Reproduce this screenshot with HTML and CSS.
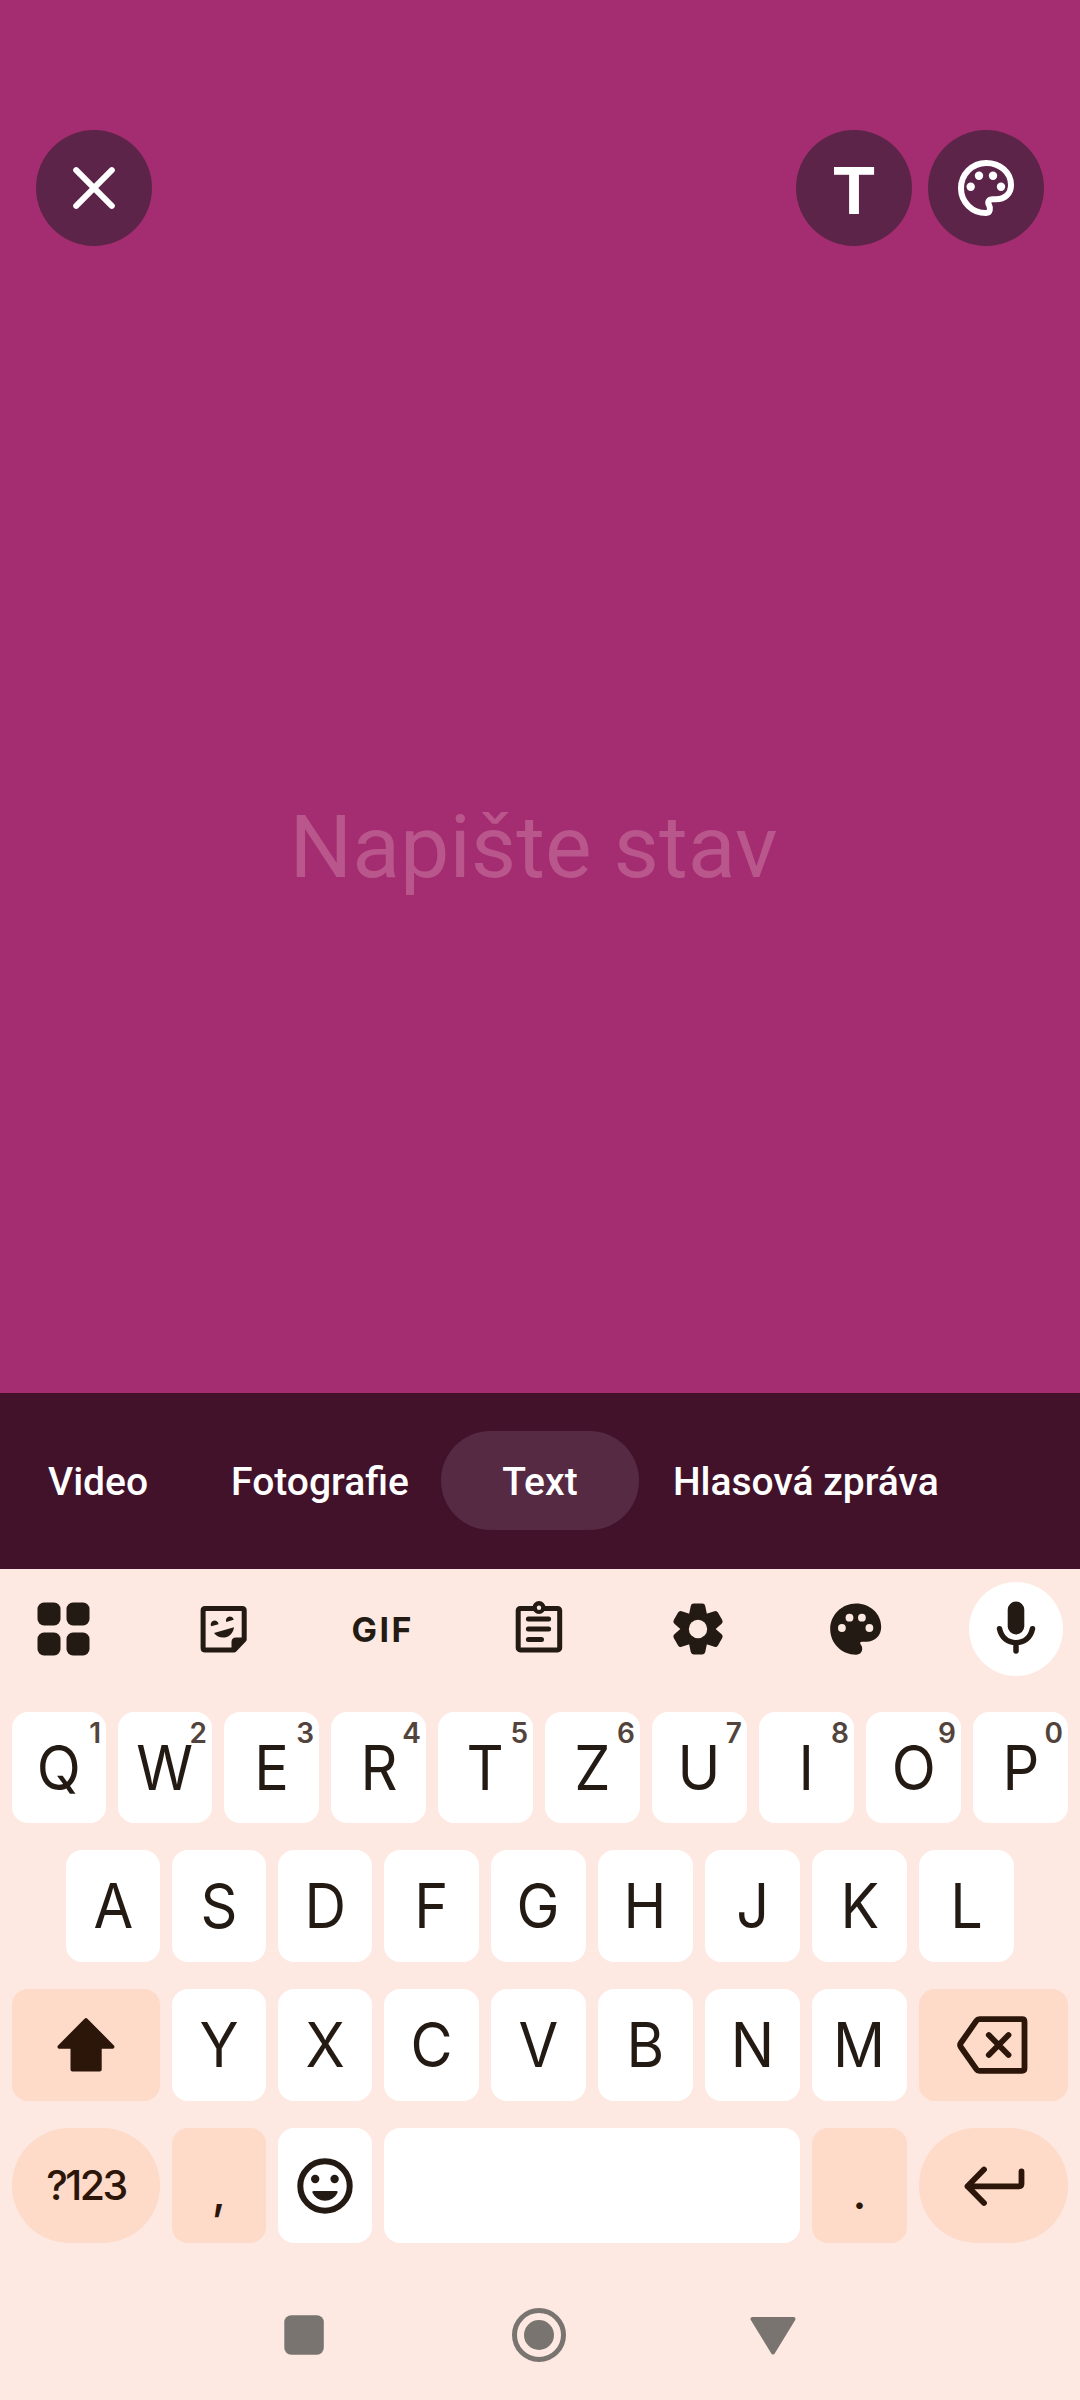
FILE: index.html
```html
<!DOCTYPE html>
<html lang="cs">
<head>
<meta charset="utf-8">
<title>Stav</title>
<link rel="stylesheet" href="styles.css">
</head>
<body>
<main class="composer">
  <header class="actions">
    <button class="round" aria-label="Zavřít">
      <svg width="56" height="56" viewBox="0 0 56 56" fill="none" stroke="currentColor" stroke-width="6" stroke-linecap="round"><path d="M10.2 10.2 45.8 45.8M45.8 10.2 10.2 45.8"/></svg>
    </button>
    <div class="tools">
      <button class="round font-toggle">T</button>
      <button class="round" aria-label="Barva">
        <svg width="56" height="56" viewBox="0 0 56 56"><path fill="none" stroke="currentColor" stroke-width="6" d="M28.3 3C42 3 53 12.5 53 25c0 9-6.500 14.300-15 14.300h-3C30.500 39.300 29.300 42 31 45c1.600 3 1.500 8-3 8C14 53 3 42 3 28.300 3 14.500 14 3 28.300 3Z"/><g fill="currentColor"><circle cx="12.700" cy="26.700" r="4.200"/><circle cx="21" cy="15.700" r="4.200"/><circle cx="35" cy="15.700" r="4.200"/><circle cx="43" cy="26.700" r="4.200"/></g></svg>
      </button>
    </div>
  </header>
  <p class="placeholder">Napište stav</p>
</main>

<nav class="modes">
  <span class="mode">Video</span>
  <span class="mode">Fotografie</span>
  <span class="mode active">Text</span>
  <span class="mode">Hlasová zpráva</span>
</nav>

<section class="keyboard">
  <div class="toolbar">
    <span class="tool"><svg width="56" height="56" viewBox="0 0 56 56" fill="currentColor"><rect x="2.500" y="1.500" width="23" height="23" rx="6.500"/><rect x="31.500" y="1.500" width="23" height="23" rx="6.500"/><rect x="2.500" y="31.500" width="23" height="23" rx="6.500"/><rect x="31.500" y="31.500" width="23" height="23" rx="6.500"/></svg></span>
    <span class="tool"><svg width="56" height="56" viewBox="0 0 56 56" fill="currentColor"><path fill="none" stroke="currentColor" stroke-width="5" stroke-linejoin="round" d="M11.100 7.500H48.200q2 0 2 2V38.500L40.200 48.900H11.100q-2 0-2-2V9.500q0-2 2-2Z"/><path d="M37.500 50V41q0-4.500 4.500-4.500H52L40 50Z"/><path d="M17.200 25.300a3.900 3.900 0 1 1 7.300-2.100ZM32.300 21a3.900 3.900 0 1 1 7.400-2.200ZM20 32 40 26.300C38.500 38 25.500 39.500 20 32Z"/></svg></span>
    <span class="tool gif">GIF</span>
    <span class="tool"><svg width="56" height="56" viewBox="0 0 56 56" fill="none" stroke="currentColor" stroke-width="5" stroke-linecap="round"><rect x="7.200" y="7.500" width="41.500" height="41.400" rx="2"/><circle cx="28" cy="6.500" r="6.500" fill="currentColor" stroke="none"/><circle cx="28" cy="6.700" r="2.200" fill="#fce9e1" stroke="none"/><path d="M17.400 18H37.600M17.400 28H37.600M17.400 38.400H30.500"/></svg></span>
    <span class="tool"><svg width="56" height="56" viewBox="0 0 56 56"><g fill="currentColor" stroke="currentColor" stroke-width="6" stroke-linejoin="round"><path id="tooth" d="M23.700 5.500H32.300L34.500 16V40L32.300 50.500H23.700L21.500 40V16Z"/><use href="#tooth" transform="rotate(60 28 28)"/><use href="#tooth" transform="rotate(120 28 28)"/></g><circle cx="28" cy="28" r="9.200" fill="#fce9e1"/></svg></span>
    <span class="tool"><svg width="56" height="56" viewBox="0 0 56 56"><path fill="currentColor" d="M27 2.500C41 2.500 52.200 12.500 52.200 26c0 8.500-6.200 14.700-14.700 14.700H33C31 40.700 30.800 42 31.600 43.300 32.800 45 33.200 46 33.200 48c0 3.500-2.700 5.700-6.200 5.700C13 53.700 1.200 42.500 1.200 28 1.200 14 13 2.500 27 2.500Z"/><g fill="#fce9e1"><circle cx="12.900" cy="27" r="3.900"/><circle cx="20.500" cy="16.700" r="3.900"/><circle cx="32.900" cy="16.700" r="3.900"/><circle cx="40.400" cy="27" r="3.900"/></g></svg></span>
    <span class="tool mic"><svg width="56" height="56" viewBox="0 0 56 56"><rect x="19.700" y=".500" width="16.600" height="33" rx="8.300" fill="currentColor"/><path fill="none" stroke="currentColor" stroke-width="5.500" stroke-linecap="round" d="M11.500 27.700C13.500 37 20 41.700 28 41.700S42.500 37 44.500 27.700M28 42V50"/></svg></span>
  </div>

  <div class="row first">
    <button class="key slim"><span class="cap">Q</span><sup class="hint">1</sup></button>
    <button class="key slim"><span class="cap">W</span><sup class="hint">2</sup></button>
    <button class="key"><span class="cap">E</span><sup class="hint">3</sup></button>
    <button class="key"><span class="cap">R</span><sup class="hint">4</sup></button>
    <button class="key"><span class="cap">T</span><sup class="hint">5</sup></button>
    <button class="key"><span class="cap">Z</span><sup class="hint">6</sup></button>
    <button class="key"><span class="cap">U</span><sup class="hint">7</sup></button>
    <button class="key"><span class="cap">I</span><sup class="hint">8</sup></button>
    <button class="key"><span class="cap">O</span><sup class="hint">9</sup></button>
    <button class="key"><span class="cap">P</span><sup class="hint">0</sup></button>
  </div>
  <div class="row indent">
    <button class="key slim"><span class="cap">A</span></button>
    <button class="key slim"><span class="cap">S</span></button>
    <button class="key slim"><span class="cap">D</span></button>
    <button class="key"><span class="cap">F</span></button>
    <button class="key"><span class="cap">G</span></button>
    <button class="key"><span class="cap">H</span></button>
    <button class="key"><span class="cap">J</span></button>
    <button class="key"><span class="cap">K</span></button>
    <button class="key"><span class="cap">L</span></button>
  </div>
  <div class="row">
    <button class="key special wide" aria-label="Shift"><svg width="60" height="60" viewBox="0 0 60 60" fill="currentColor" stroke="currentColor" stroke-width="4" stroke-linejoin="round"><path d="M30 5.200 3.500 31.800H16.500V54.500H43.700V31.800H56.500Z"/></svg></button>
    <button class="key slim"><span class="cap">Y</span></button>
    <button class="key slim"><span class="cap">X</span></button>
    <button class="key"><span class="cap">C</span></button>
    <button class="key"><span class="cap">V</span></button>
    <button class="key"><span class="cap">B</span></button>
    <button class="key"><span class="cap">N</span></button>
    <button class="key"><span class="cap">M</span></button>
    <button class="key special wide end" aria-label="Backspace"><svg width="80" height="60" viewBox="0 0 80 60" fill="none" stroke="currentColor" stroke-width="5.800" stroke-linecap="round" stroke-linejoin="round"><path d="M25.500 4.200H68q2.500 0 2.500 2.500V53.300q0 2.500-2.500 2.500H25.500q-2 0-3-1.500L6.800 32q-1.400-2 0-4L22.500 5.700q1-1.500 3-1.500ZM34.800 20 54.500 40M54.500 20 34.800 40"/></svg></button>
  </div>
  <div class="row last">
    <button class="key special wide pill symbols">?123</button>
    <button class="key special slim punct">,</button>
    <button class="key slim" aria-label="Emoji"><svg width="60" height="60" viewBox="0 0 60 60" fill="currentColor"><circle cx="30" cy="30" r="24.700" fill="none" stroke="currentColor" stroke-width="6"/><circle cx="20.200" cy="23" r="4.200"/><circle cx="39.600" cy="23" r="4.200"/><path d="M18.500 35H41.500q1.800 0 1 1.800C37.500 47.300 22.500 47.300 17.500 36.800q-.8-1.800 1-1.800Z"/></svg></button>
    <button class="key space" aria-label="Mezera"></button>
    <button class="key special punct">.</button>
    <button class="key special wide end pill" aria-label="Enter"><svg width="80" height="60" viewBox="0 0 80 60" fill="none" stroke="currentColor" stroke-width="5.800" stroke-linecap="round" stroke-linejoin="round"><path d="M30 13.500 13.500 30.300 30 47M13.500 30.300H65q2.500 0 2.500-2.500V15.500"/></svg></button>
  </div>

  <div class="system">
    <svg width="56" height="56" viewBox="0 0 56 56"><rect x="8.300" y="8.200" width="39.500" height="39.500" rx="7" fill="currentColor"/></svg>
    <svg width="56" height="56" viewBox="0 0 56 56"><circle cx="28" cy="28" r="24.500" fill="none" stroke="currentColor" stroke-width="5"/><circle cx="28" cy="28" r="15" fill="currentColor"/></svg>
    <svg width="56" height="56" viewBox="0 0 56 56"><path fill="currentColor" stroke="currentColor" stroke-width="4" stroke-linejoin="round" d="M7.500 12H48.500L28 45.500Z"/></svg>
  </div>
</section>
</body>
</html>
```
FILE: styles.css
```css
* { box-sizing: border-box; }

body {
  margin: 0;
  width: 1080px;
  height: 2400px;
  display: flex;
  flex-direction: column;
  font-family: Roboto, sans-serif;
  background: #fde9e1;
}

button {
  border: 0;
  padding: 0;
  font: inherit;
  color: inherit;
}

svg { display: block; flex: none; }

.composer {
  height: 1393px;
  padding: 130px 36px 0;
  background: #a42c70;
}

.actions {
  display: flex;
  justify-content: space-between;
}

.tools { display: flex; gap: 16px; }

.round {
  width: 116px;
  height: 116px;
  display: flex;
  align-items: center;
  justify-content: center;
  border-radius: 50%;
  background: #5c2448;
  color: #fff;
}

.font-toggle {
  padding-top: 4px;
  font: bold 68px "Liberation Sans", sans-serif;
}

.placeholder {
  margin: 549px 0 0;
  padding-right: 13px;
  text-align: center;
  font-size: 88px;
  line-height: 104px;
  color: #b9568c;
}

.modes {
  height: 176px;
  padding: 38px 8px 0;
  display: flex;
  align-items: flex-start;
  background: #42122b;
  color: #fff;
}

.mode {
  height: 99px;
  padding: 0 33px 0 40px;
  border-radius: 50px;
  font-size: 39px;
  font-weight: 500;
  line-height: 103px;
  white-space: nowrap;
}

.mode + .mode { padding: 0 32px 0 34px; margin-left: 16px; }

.mode.active + .mode { margin-left: 0; }

.mode + .mode.active {
  width: 198px;
  padding: 0;
  margin-left: 0;
  text-align: center;
  background: #552a42;
}

.keyboard {
  flex: 1;
  color: #231a13;
  font-family: Inter, sans-serif;
}

.toolbar {
  height: 143px;
  padding: 13px 17px 0 16px;
  display: flex;
  justify-content: space-between;
}

.tool {
  width: 94px;
  height: 94px;
  display: flex;
  align-items: center;
  justify-content: center;
}

.gif {
  padding-left: 4px;
  font-size: 34px;
  font-weight: 700;
  letter-spacing: 2.500px;
}

.mic { border-radius: 50%; background: #fff; }

.row {
  height: 112px;
  margin-bottom: 27px;
  padding-left: 12px;
  display: flex;
  gap: 12px;
}

.row.first { height: 111px; }
.row.indent { padding-left: 66px; }
.row.last { height: 115px; margin-bottom: 64px; }

.key {
  position: relative;
  flex: none;
  width: 95px;
  display: flex;
  align-items: center;
  justify-content: center;
  border-radius: 16px;
  background: #fff;
  font-size: 62px;
  line-height: 1;
}

.cap { transform: scaleX(.93); }

.hint {
  position: absolute;
  top: 7px;
  right: 6px;
  font-size: 28px;
  font-weight: 600;
  line-height: 28px;
  letter-spacing: -1px;
  color: #52443c;
}

.special { background: #fedac8; color: #2b1609; }
.slim { width: 94px; }
.wide { width: 148px; }
.end { width: 149px; }
.pill { border-radius: 58px; }
.space { width: 416px; }
.symbols { font-size: 41px; font-weight: 500; letter-spacing: -2.500px; }
.punct { padding-top: 12px; font-size: 46px; font-weight: 500; }

.system {
  padding: 0 279px 0 276px;
  display: flex;
  justify-content: space-between;
  color: #7a7470;
}
```
